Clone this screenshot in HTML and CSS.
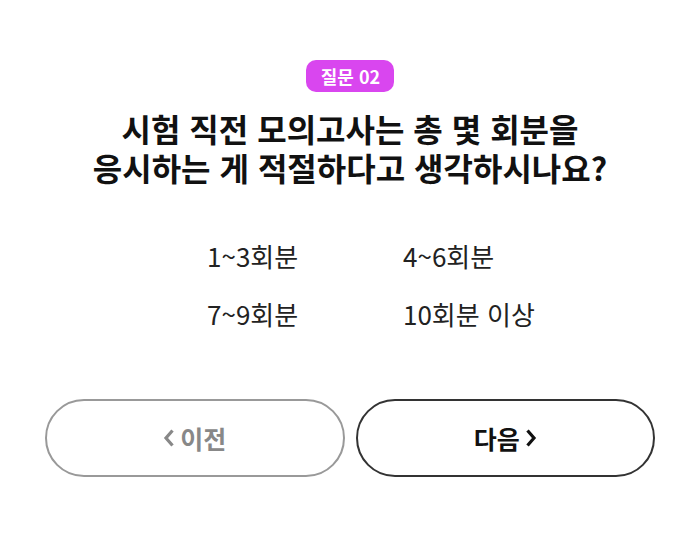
FILE: index.html
```html
<!DOCTYPE html>
<html lang="ko">
<head>
<meta charset="UTF-8">
<link rel="stylesheet" href="styles.css">
<title>질문 02</title>
</head>
<body>
<div class="survey">
  <div class="step">
    <span class="badge">질문 02</span>
  </div>
  <h1 class="question">시험 직전 모의고사는 총 몇 회분을<br>응시하는 게 적절하다고 생각하시나요?</h1>

  <div class="choices">
    <label class="choice">1~3회분</label>
    <label class="choice">4~6회분</label>
    <label class="choice">7~9회분</label>
    <label class="choice">10회분 이상</label>
  </div>

  <div class="nav">
    <button class="btn btn-prev">
      <svg width="12" height="20" viewBox="0 0 12 20"><path d="M9.5 2.5 L3 10 L9.5 17.5" fill="none" stroke="currentColor" stroke-width="3.2"/></svg>
      이전
    </button>
    <button class="btn btn-next">
      다음
      <svg width="12" height="20" viewBox="0 0 12 20"><path d="M2.5 2.5 L9 10 L2.5 17.5" fill="none" stroke="currentColor" stroke-width="3.2"/></svg>
    </button>
  </div>
</div>
</body>
</html>
```

FILE: styles.css
```css
html, body {margin: 0; padding: 0; background: #fff;}
body {font-family: "Noto Sans CJK KR", "Noto Sans", sans-serif; color: #111;}
.survey {padding: 60px 45px 0 45px;}
.step {text-align: center; height: 32px;}
.badge {
  display: inline-block; height: 32px; line-height: 32px; padding: 0 14px 0 15px;
  border-radius: 10px; background: #d946ef; color: #fff;
  font-size: 18px; font-weight: bold; vertical-align: top;
}
.question {
  margin: 17px 0 0 0; text-align: center;
  font-size: 32px; line-height: 39px; font-weight: bold; color: #111;
}
.choices {
  display: grid; grid-template-columns: 196px auto;
  row-gap: 22px; margin-top: 51px; padding-left: 162px;
}
.choice {font-size: 26px; line-height: 36px; color: #222; cursor: pointer;}
.nav {display: flex; gap: 11px; margin-top: 67px;}
.btn {
  flex: 1; height: 78px; border-radius: 39px; background: #fff;
  display: flex; align-items: center; justify-content: center; gap: 5px;
  font-family: inherit; font-size: 25px; font-weight: bold; cursor: pointer;
}
.btn-prev {border: 2px solid #999; color: #888;}
.btn-next {border: 2px solid #333; color: #111;}
```
